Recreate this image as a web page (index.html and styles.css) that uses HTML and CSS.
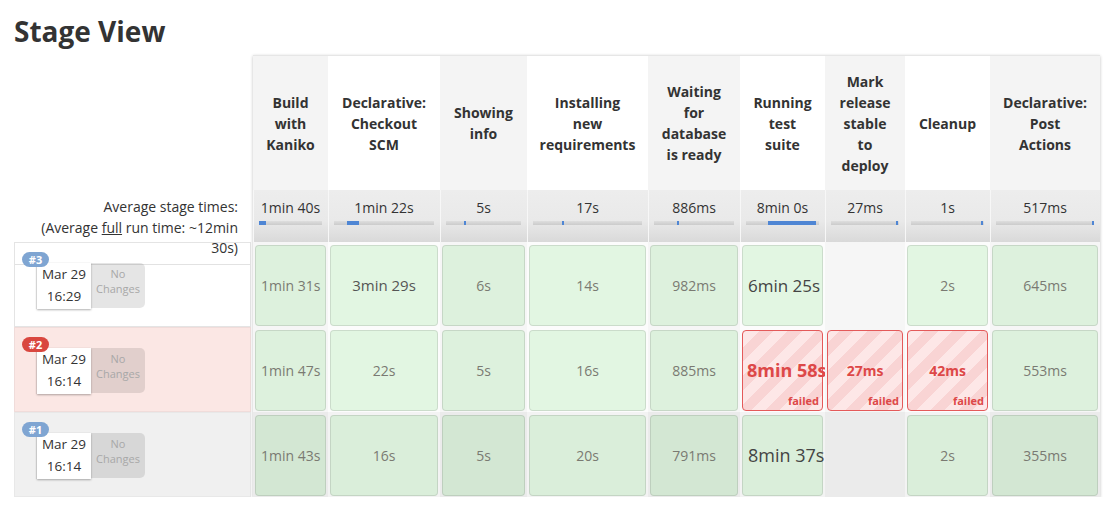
FILE: index.html
```html
<!DOCTYPE html>
<html>
<head>
<meta charset="utf-8">
<link rel="stylesheet" href="styles.css">
</head>
<body>
<h1 class="title">Stage View</h1>
<div class="stage-view">
  <div class="side">
    <div class="side-head"></div>
    <div class="avg-label">Average stage times:<br>(Average <u>full</u> run time: ~12min<br>30s)</div>
    <div class="build build-first">
      <span class="badge">#3</span>
      <div class="build-info">
        <div class="date">Mar 29<br>16:29</div>
        <div class="changes">No<br>Changes</div>
      </div>
    </div>
    <div class="build build-failed">
      <span class="badge badge-red">#2</span>
      <div class="build-info">
        <div class="date">Mar 29<br>16:14</div>
        <div class="changes">No<br>Changes</div>
      </div>
    </div>
    <div class="build build-old">
      <span class="badge">#1</span>
      <div class="build-info">
        <div class="date">Mar 29<br>16:14</div>
        <div class="changes">No<br>Changes</div>
      </div>
    </div>
  </div>

  <div class="stages">
    <div class="row row-head">
      <div class="head">Build<br>with<br>Kaniko</div>
      <div class="head">Declarative:<br>Checkout<br>SCM</div>
      <div class="head">Showing<br>info</div>
      <div class="head">Installing<br>new<br>requirements</div>
      <div class="head">Waiting<br>for<br>database<br>is ready</div>
      <div class="head">Running<br>test<br>suite</div>
      <div class="head">Mark<br>release<br>stable<br>to<br>deploy</div>
      <div class="head">Cleanup</div>
      <div class="head">Declarative:<br>Post<br>Actions</div>
    </div>
    <div class="row row-avg">
      <div class="avg">1min 40s<div class="track"><span style="margin-left:0;width:7px"></span></div></div>
      <div class="avg">1min 22s<div class="track"><span style="margin-left:13px;width:12px"></span></div></div>
      <div class="avg">5s<div class="track"><span style="margin-left:18px;width:2px"></span></div></div>
      <div class="avg">17s<div class="track"><span style="margin-left:29px;width:2px"></span></div></div>
      <div class="avg">886ms<div class="track"><span style="margin-left:23px;width:2px"></span></div></div>
      <div class="avg">8min 0s<div class="track"><span style="margin-left:22px;width:48px"></span></div></div>
      <div class="avg">27ms<div class="track"><span style="margin-left:65px;width:2px"></span></div></div>
      <div class="avg">1s<div class="track"><span style="margin-left:70px;width:2px"></span></div></div>
      <div class="avg">517ms<div class="track"><span style="margin-left:96px;width:2px"></span></div></div>
    </div>
    <div class="row row-light">
      <div class="cell"><div class="box">1min 31s</div></div>
      <div class="cell"><div class="box size-1">3min 29s</div></div>
      <div class="cell"><div class="box">6s</div></div>
      <div class="cell"><div class="box">14s</div></div>
      <div class="cell"><div class="box">982ms</div></div>
      <div class="cell"><div class="box size-2">6min 25s</div></div>
      <div class="cell"></div>
      <div class="cell"><div class="box">2s</div></div>
      <div class="cell"><div class="box">645ms</div></div>
    </div>
    <div class="row row-light">
      <div class="cell"><div class="box">1min 47s</div></div>
      <div class="cell"><div class="box">22s</div></div>
      <div class="cell"><div class="box">5s</div></div>
      <div class="cell"><div class="box">16s</div></div>
      <div class="cell"><div class="box">885ms</div></div>
      <div class="cell"><div class="box box-fail size-fail">8min 58s<span class="fail-label">failed</span></div></div>
      <div class="cell"><div class="box box-fail">27ms<span class="fail-label">failed</span></div></div>
      <div class="cell"><div class="box box-fail">42ms<span class="fail-label">failed</span></div></div>
      <div class="cell"><div class="box">553ms</div></div>
    </div>
    <div class="row row-dark">
      <div class="cell"><div class="box">1min 43s</div></div>
      <div class="cell"><div class="box">16s</div></div>
      <div class="cell"><div class="box">5s</div></div>
      <div class="cell"><div class="box">20s</div></div>
      <div class="cell"><div class="box">791ms</div></div>
      <div class="cell"><div class="box size-3">8min 37s</div></div>
      <div class="cell"></div>
      <div class="cell"><div class="box">2s</div></div>
      <div class="cell"><div class="box">355ms</div></div>
    </div>
  </div>
</div>
</body>
</html>
```

FILE: styles.css
```css
* { box-sizing: border-box; }

body {
  margin: 0;
  padding: 12px 0 0 14px;
  font-family: "Open Sans", "Noto Sans", sans-serif;
  color: #333;
  background: #fff;
}

.title {
  margin: 0 0 5px;
  font-size: 28px;
  line-height: 38px;
  font-weight: 700;
  color: #333;
}

.stage-view {
  display: flex;
  align-items: flex-start;
}

/* ---------- left column ---------- */
.side {
  width: 237px;
  flex: none;
}

.side-head { height: 135px; }

.avg-label {
  position: relative;
  z-index: 1;
  height: 52px;
  padding: 7px 13px 0 0;
  text-align: right;
  font-size: 14px;
  line-height: 20.5px;
  color: #333;
}

.avg-label u { text-decoration-thickness: 1px; }

.build {
  height: 85px;
  border: 1px solid #e4e4e4;
  padding: 9px 0 0 7px;
  display: flex;
  flex-direction: column;
  align-items: flex-start;
}

.build-first {
  background: linear-gradient(to bottom, #fff 21px, #e2e2e2 21px, #e2e2e2 22px, #fff 22px);
}

.build-failed {
  background: #fbe7e4;
  border-color: #f0dcda;
}

.build-old {
  background: #f0f0f0;
  border-color: #e8e8e8;
}

.badge {
  position: relative;
  z-index: 2;
  display: block;
  height: 15px;
  min-width: 27px;
  padding: 0 5px;
  border-radius: 8px;
  background: #7fa5d2;
  color: #fff;
  font-size: 11px;
  font-weight: 700;
  line-height: 15px;
  text-align: center;
}

.badge-red { background: #d9473f; }

.build-info {
  display: flex;
  margin: -4px 0 0 15px;
}

.date {
  width: 54px;
  height: 46px;
  background: #fff;
  box-shadow: 0 1px 2px rgba(0, 0, 0, 0.3), -1px 0 1px rgba(0, 0, 0, 0.08);
  text-align: center;
  font-size: 13.5px;
  line-height: 22px;
  color: #333;
}

.changes {
  width: 54px;
  height: 45px;
  background: rgba(0, 0, 0, 0.1);
  border-radius: 0 5px 5px 0;
  color: #a8a8a8;
  font-size: 11px;
  line-height: 15px;
  text-align: center;
  padding-top: 3px;
}

/* ---------- stage table ---------- */
.stages {
  margin-left: 2px;
  width: 847px;
  display: grid;
  grid-template-columns: 75px 112px 87px 121px 92px 85px 80px 85px 110px;
  grid-template-rows: 134px 52px 85px 85px 85px;
  border-top: 1px solid #e6e6e6;
  box-shadow: 0 1px 3px rgba(0, 0, 0, 0.25);
  background: #fff;
}

.row { display: contents; }

.head {
  display: flex;
  align-items: center;
  justify-content: center;
  text-align: center;
  font-weight: 700;
  font-size: 14px;
  line-height: 21px;
  padding: 0 4px;
  color: #333;
}

.row-head > .head:nth-child(odd) { background: #f4f4f4; }
.row-head > .head:nth-child(even) { background: #fff; }

.avg {
  background: linear-gradient(to bottom, #ededed, #e9e9e9 60%, #d9d9d9);
  border-left: 1px solid #f7f7f7;
  padding: 8px 6px 0 5px;
  text-align: center;
  font-size: 14px;
  line-height: 20px;
  color: #333;
}

.track {
  display: flex;
  height: 4px;
  margin-top: 3px;
  background: linear-gradient(to bottom, #dedede, #cbcbcb);
}

.track span {
  display: block;
  height: 4px;
  flex: none;
  background: #4f86d4;
}

.cell {
  padding: 3px 2px 1px;
  overflow: hidden;
}

.row-light > .cell:nth-child(odd) { background: #f6f6f6; }
.row-light > .cell:nth-child(even) { background: #fcfcfc; }
.row-dark > .cell:nth-child(odd) { background: #ebebeb; }
.row-dark > .cell:nth-child(even) { background: #f3f3f3; }

.box {
  position: relative;
  height: 100%;
  border: 1px solid rgba(0, 0, 0, 0.1);
  border-radius: 4px;
  background: rgba(0, 200, 0, 0.1);
  padding: 0 5px;
  text-align: center;
  line-height: 79px;
  white-space: nowrap;
  font-size: 14px;
  color: #7a7a72;
}

.size-1 { font-size: 15px; color: #555; }
.size-2 { font-size: 17px; color: #444; }
.size-3 { font-size: 18px; color: #444; }

.box-fail {
  border-color: #e45a5a;
  background: repeating-linear-gradient(-45deg, #fde7e7 0, #fde7e7 10px, #f9d4d4 10px, #f9d4d4 20px);
  color: #dd4848;
  font-weight: 700;
}

.size-fail { font-size: 18px; padding: 0 4px; }

.fail-label {
  position: absolute;
  right: 3px;
  bottom: 3px;
  font-size: 11px;
  line-height: 12px;
  font-weight: 700;
  color: #dd4848;
}
```
